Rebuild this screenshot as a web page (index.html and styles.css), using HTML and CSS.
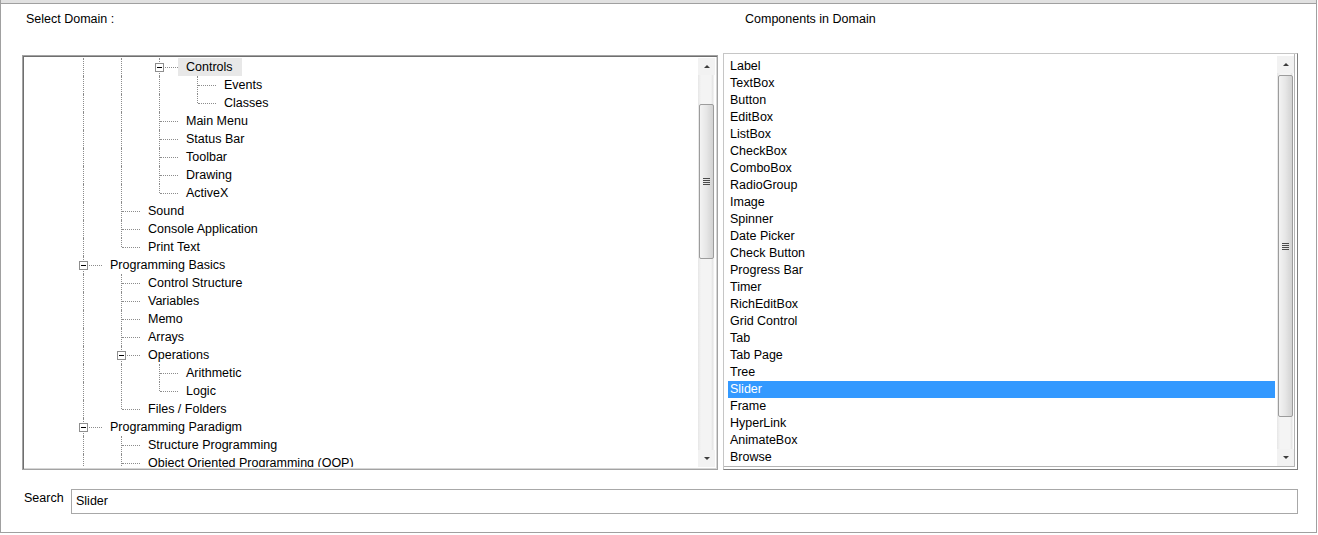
FILE: index.html
```html
<!DOCTYPE html>
<html>
<head>
<meta charset="utf-8">
<link rel="stylesheet" href="styles.css">
</head>
<body>
<div class="window">
  <div class="titlebar"></div>
  <div class="content">
    <div class="panels">
      <section class="panel panel-left">
        <div class="heading">Select Domain :</div>
        <div class="tree-box">
          <div class="tree">
            <div class="row"><span class="g v"></span><span class="g v"></span><span class="c mid"><i class="exp"></i></span><span class="label sel">Controls</span></div>
            <div class="row"><span class="g v"></span><span class="g v"></span><span class="g v"></span><span class="c mid"></span><span class="label">Events</span></div>
            <div class="row"><span class="g v"></span><span class="g v"></span><span class="g v"></span><span class="c end"></span><span class="label">Classes</span></div>
            <div class="row"><span class="g v"></span><span class="g v"></span><span class="c mid"></span><span class="label">Main Menu</span></div>
            <div class="row"><span class="g v"></span><span class="g v"></span><span class="c mid"></span><span class="label">Status Bar</span></div>
            <div class="row"><span class="g v"></span><span class="g v"></span><span class="c mid"></span><span class="label">Toolbar</span></div>
            <div class="row"><span class="g v"></span><span class="g v"></span><span class="c mid"></span><span class="label">Drawing</span></div>
            <div class="row"><span class="g v"></span><span class="g v"></span><span class="c end"></span><span class="label">ActiveX</span></div>
            <div class="row"><span class="g v"></span><span class="c mid"></span><span class="label">Sound</span></div>
            <div class="row"><span class="g v"></span><span class="c mid"></span><span class="label">Console Application</span></div>
            <div class="row"><span class="g v"></span><span class="c end"></span><span class="label">Print Text</span></div>
            <div class="row"><span class="c mid"><i class="exp"></i></span><span class="label">Programming Basics</span></div>
            <div class="row"><span class="g v"></span><span class="c mid"></span><span class="label">Control Structure</span></div>
            <div class="row"><span class="g v"></span><span class="c mid"></span><span class="label">Variables</span></div>
            <div class="row"><span class="g v"></span><span class="c mid"></span><span class="label">Memo</span></div>
            <div class="row"><span class="g v"></span><span class="c mid"></span><span class="label">Arrays</span></div>
            <div class="row"><span class="g v"></span><span class="c mid"><i class="exp"></i></span><span class="label">Operations</span></div>
            <div class="row"><span class="g v"></span><span class="g v"></span><span class="c mid"></span><span class="label">Arithmetic</span></div>
            <div class="row"><span class="g v"></span><span class="g v"></span><span class="c end"></span><span class="label">Logic</span></div>
            <div class="row"><span class="g v"></span><span class="c end"></span><span class="label">Files / Folders</span></div>
            <div class="row"><span class="c mid"><i class="exp"></i></span><span class="label">Programming Paradigm</span></div>
            <div class="row"><span class="g v"></span><span class="c mid"></span><span class="label">Structure Programming</span></div>
            <div class="row"><span class="g v"></span><span class="c mid"></span><span class="label">Object Oriented Programming (OOP)</span></div>
          </div>
          <div class="sb sb-tree">
            <div class="sb-btn"><i class="arrow up"></i></div>
            <div class="sb-track"><div class="thumb"><i class="grip"></i></div></div>
            <div class="sb-btn"><i class="arrow down"></i></div>
          </div>
        </div>
      </section>
      <section class="panel panel-right">
        <div class="heading">Components in Domain</div>
        <div class="list-box">
          <div class="list">
            <div class="item">Label</div>
            <div class="item">TextBox</div>
            <div class="item">Button</div>
            <div class="item">EditBox</div>
            <div class="item">ListBox</div>
            <div class="item">CheckBox</div>
            <div class="item">ComboBox</div>
            <div class="item">RadioGroup</div>
            <div class="item">Image</div>
            <div class="item">Spinner</div>
            <div class="item">Date Picker</div>
            <div class="item">Check Button</div>
            <div class="item">Progress Bar</div>
            <div class="item">Timer</div>
            <div class="item">RichEditBox</div>
            <div class="item">Grid Control</div>
            <div class="item">Tab</div>
            <div class="item">Tab Page</div>
            <div class="item">Tree</div>
            <div class="item sel">Slider</div>
            <div class="item">Frame</div>
            <div class="item">HyperLink</div>
            <div class="item">AnimateBox</div>
            <div class="item">Browse</div>
          </div>
          <div class="sb sb-list">
            <div class="sb-btn"><i class="arrow up"></i></div>
            <div class="sb-track"><div class="thumb"><i class="grip"></i></div></div>
            <div class="sb-btn"><i class="arrow down"></i></div>
          </div>
        </div>
      </section>
    </div>
    <div class="search-row">
      <span class="search-label">Search</span>
      <div class="search-input">Slider</div>
    </div>
  </div>
</div>
</body>
</html>
```

FILE: styles.css
```css
body {
  margin: 0;
  font-family: "Liberation Sans", Arial, sans-serif;
  font-size: 12.5px;
  color: #000;
  background: #fff;
}

.window {
  width: 1317px;
  height: 533px;
  box-sizing: border-box;
  border-left: 1px solid #a0a0a0;
  border-right: 1px solid #a0a0a0;
  border-bottom: 1px solid #a0a0a0;
  background: #fff;
}

.titlebar {
  height: 3px;
  background: #e1e1e1;
  border-bottom: 1px solid #a0a0a0;
}

.content {
  padding: 8px 0 0 21px;
}

.panels {
  display: grid;
  grid-template-columns: 696px 575px;
  column-gap: 5px;
  height: 458px;
}

.panel {
  display: flex;
  flex-direction: column;
  min-height: 0;
}

.heading {
  line-height: 14px;
  flex: none;
}

.panel-left .heading {
  height: 43px;
  padding-left: 4px;
}

.panel-right .heading {
  height: 41px;
  padding-left: 22px;
}

/* ---------- tree ---------- */
.tree-box {
  flex: 1;
  min-height: 0;
  display: flex;
  border: 1px solid #a3a3a3;
  box-shadow: inset 1px 1px 0 #6f6f6f, inset -1px -1px 0 #d6d6d6;
  padding: 2px;
  background: #fff;
}

.tree {
  flex: 1;
  overflow: hidden;
  padding-left: 39px;
}

.row {
  display: flex;
  height: 18px;
  white-space: nowrap;
}

.g, .c {
  position: relative;
  flex: none;
  width: 38px;
  height: 18px;
}

.g.v::before,
.c::before {
  content: "";
  position: absolute;
  left: 19px;
  top: 0;
  bottom: 0;
  border-left: 1px dotted #8c8c8c;
}

.c.end::before {
  bottom: 9px;
}

.c::after {
  content: "";
  position: absolute;
  left: 20px;
  top: 9px;
  width: 18px;
  border-top: 1px dotted #8c8c8c;
}

.exp {
  position: absolute;
  left: 15px;
  top: 5px;
  width: 7px;
  height: 7px;
  border: 1px solid #8e8e8e;
  background: #fff;
  z-index: 1;
}

.exp::after {
  content: "";
  position: absolute;
  left: 1px;
  top: 3px;
  width: 5px;
  height: 1px;
  background: #000;
}

.label {
  display: flex;
  align-items: center;
  height: 18px;
  padding: 0 9px 0 8px;
}

.label.sel {
  background: #e8e8e8;
}

/* ---------- scrollbar ---------- */
.sb {
  flex: none;
  width: 17px;
  display: flex;
  flex-direction: column;
  background: #f0f0f0;
}

.sb-btn {
  height: 17px;
  flex: none;
  display: flex;
  align-items: center;
  justify-content: center;
  background: #f2f2f2;
}

.arrow {
  width: 0;
  height: 0;
  border-left: 3px solid transparent;
  border-right: 3px solid transparent;
}

.arrow.up {
  border-bottom: 3px solid #3c3c3c;
}

.arrow.down {
  border-top: 3px solid #3c3c3c;
}

.sb-track {
  flex: 1;
  display: flex;
  flex-direction: column;
  background: linear-gradient(to right, #e6e6e6 0, #f4f4f4 3px, #f4f4f4 13px, #e2e2e2 15px, #fdfdfd 16px);
}

.thumb {
  box-sizing: border-box;
  width: 15px;
  margin-left: 1px;
  border: 1px solid #9c9c9c;
  border-radius: 2px;
  background: linear-gradient(to right, #f3f3f3, #e6e6e6 50%, #d2d2d2);
  display: flex;
  align-items: center;
  justify-content: center;
}

.sb-tree .thumb {
  margin-top: 29px;
  height: 155px;
}

.sb-list .thumb {
  margin-top: 2px;
  height: 342px;
}

.grip {
  width: 7px;
  height: 7px;
  background: repeating-linear-gradient(to bottom, #4a4a4a 0, #4a4a4a 1px, transparent 1px, transparent 2px);
}

/* ---------- list ---------- */
.list-box {
  flex: 1;
  min-height: 0;
  display: flex;
  border: 1px solid;
  border-color: #c6c6c6 #7e7e7e #7e7e7e #c6c6c6;
  box-shadow: inset -2px -2px 0 #fff, inset -3px -3px 0 #b4b4b4;
  padding: 2px 3px 3px 2px;
  background: #fff;
}

.list {
  flex: 1;
  overflow: hidden;
  padding: 2px 2px 0 2px;
}

.item {
  height: 17px;
  line-height: 17px;
  padding-left: 2px;
  white-space: nowrap;
}

.item.sel {
  background: #3399ff;
  color: #fff;
}

/* ---------- search ---------- */
.search-row {
  display: flex;
  align-items: flex-start;
  margin-top: 19px;
  padding-left: 2px;
}

.search-label {
  width: 47px;
  margin-top: 2px;
  line-height: 14px;
}

.search-input {
  box-sizing: border-box;
  width: 1227px;
  height: 25px;
  border: 1px solid #a8a8a8;
  padding: 4px 4px 0;
  line-height: 14px;
}
```
